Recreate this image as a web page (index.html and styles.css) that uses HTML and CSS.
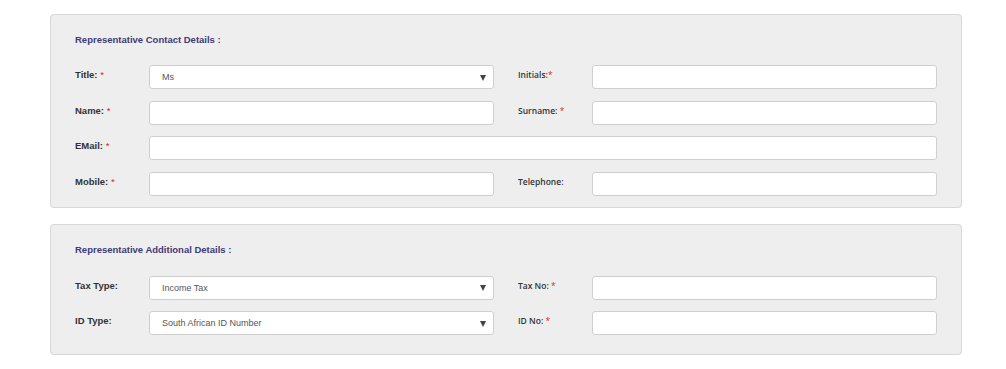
FILE: index.html
```html
<!DOCTYPE html>
<html lang="en">
<head>
    <meta charset="UTF-8">
    <title>Representative Details</title>
    <link rel="stylesheet" href="styles.css">
</head>
<body>
    <div class="page">
        <fieldset class="panel">
            <h4 class="panel-title">Representative Contact Details :</h4>
            <div class="form-grid">
                <label class="lbl">Title: <span class="req">*</span></label>
                <div class="select"><span>Ms</span><i class="arrow"></i></div>
                <label class="lbl lbl-right">Initials:<span class="req">*</span></label>
                <div class="input"></div>

                <label class="lbl">Name: <span class="req">*</span></label>
                <div class="input"></div>
                <label class="lbl lbl-right">Surname: <span class="req">*</span></label>
                <div class="input"></div>

                <label class="lbl">EMail: <span class="req">*</span></label>
                <div class="input wide"></div>

                <label class="lbl">Mobile: <span class="req">*</span></label>
                <div class="input"></div>
                <label class="lbl lbl-right">Telephone:</label>
                <div class="input"></div>
            </div>
        </fieldset>

        <fieldset class="panel panel-extra">
            <h4 class="panel-title">Representative Additional Details :</h4>
            <div class="form-grid">
                <label class="lbl">Tax Type:</label>
                <div class="select"><span>Income Tax</span><i class="arrow"></i></div>
                <label class="lbl lbl-right">Tax No: <span class="req">*</span></label>
                <div class="input"></div>

                <label class="lbl">ID Type:</label>
                <div class="select"><span>South African ID Number</span><i class="arrow"></i></div>
                <label class="lbl lbl-right">ID No: <span class="req">*</span></label>
                <div class="input"></div>
            </div>
        </fieldset>
    </div>
</body>
</html>
```

FILE: styles.css
```css
body { margin: 0; background: #fff; font-family: "Liberation Sans", Arial, sans-serif; color: #333; }
.page { padding: 14px 0 0 50px; width: 912px; }
.panel { margin: 0 0 16px 0; padding: 0 24px 11px 24px; border: 1px solid #d8d8d8; border-radius: 4px; background: #eeeeee; min-width: 0; }
.panel-extra { padding-bottom: 19px; }
.panel-title { margin: 19px 0 0 0; height: 31px; font-size: 9.5px; font-weight: bold; color: #3e3b78; }
.panel-extra .panel-title { height: 32px; }
.form-grid { display: grid; grid-template-columns: 74px 345px 24px 74px 345px; grid-auto-rows: 24px; row-gap: 11.5px; }
.lbl { grid-column: 1; font-size: 9.5px; font-weight: bold; color: #333; padding-top: 4px; }
.lbl-right { grid-column: 4; font-family: "Open Sans", sans-serif; font-size: 8.5px; font-weight: 600; padding-top: 4px; }
.req { color: #d9262b; font-weight: normal; }
.input, .select { background: #fff; border: 1px solid #cfcfcf; border-radius: 3px; box-sizing: border-box; height: 24px; }
.input.wide { grid-column: 2 / 6; }
.select { display: flex; align-items: center; justify-content: space-between; padding: 0 3px 0 12px; font-size: 9px; color: #555; }
.arrow { width: 0; height: 0; border-left: 3px solid transparent; border-right: 3px solid transparent; border-top: 6px solid #444; margin-right: 4px; margin-top: 1px; }
```
